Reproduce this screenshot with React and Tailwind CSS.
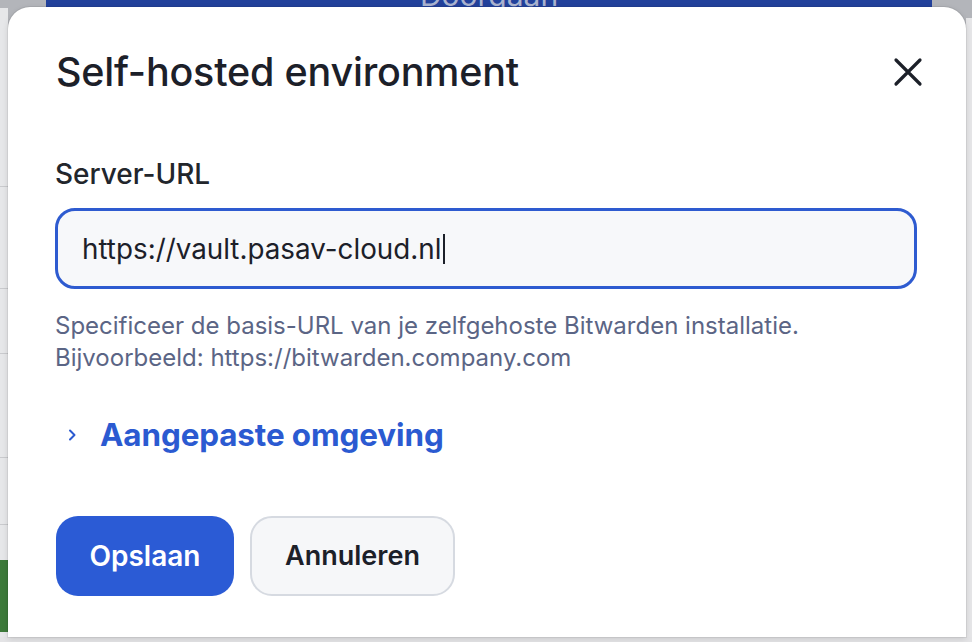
import React from 'react'

const font = { fontFamily: 'Inter, "Noto Sans", sans-serif' }

const SelfHostedDialog = () => {
    return (
        <div className="absolute left-[8px] top-[7px] w-[958px] h-[630px] bg-white rounded-t-[22px] shadow-[0_0_0_1px_rgba(0,0,0,0.06),0_2px_6px_rgba(0,0,0,0.12)] flex flex-col px-[47px]">
            <div className="flex flex-row items-center justify-between pt-[41px]">
                <h1 className="ml-[1px] text-[39.5px] leading-[48px] font-medium text-[#1c2029] tracking-[-0.2px]">Self-hosted environment</h1>
                <button className="mr-[-4px] text-[#1c2029]">
                    <svg width="30" height="30" viewBox="0 0 30 30" fill="none" stroke="currentColor" strokeWidth="3.2" strokeLinecap="round">
                        <path d="M3 3 L27 27 M27 3 L3 27" />
                    </svg>
                </button>
            </div>

            <label className="mt-[62px] text-[28px] leading-[32px] font-medium text-[#22262c]">Server-URL</label>

            <div className="mt-[18px] h-[81px] w-[862px] rounded-[20px] border-[3px] border-[#2e5bd0] bg-[#f7f8fa] flex flex-row items-center pl-[24px]">
                <span className="text-[27.8px] leading-[32px] text-[#1c2029]">https://vault.pasav-cloud.nl</span>
                <span className="ml-[2px] w-[2px] h-[30px] bg-[#1c2029]" />
            </div>

            <div className="mt-[21px] text-[24px] leading-[32px] text-[#5b6585]">
                <p>Specificeer de basis-URL van je zelfgehoste Bitwarden installatie.</p>
                <p>Bijvoorbeeld: https://bitwarden.company.com</p>
            </div>

            <button className="mt-[41px] flex flex-row items-center h-[40px] text-[#2b5ad1]">
                <svg className="ml-[12px]" width="10" height="14" viewBox="0 0 10 14" fill="none" stroke="currentColor" strokeWidth="2" strokeLinecap="round" strokeLinejoin="round">
                    <path d="M3 2.5 L7.5 7 L3 11.5" />
                </svg>
                <span className="ml-[23px] text-[31.4px] leading-[40px] font-bold tracking-[-0.1px]">Aangepaste omgeving</span>
            </button>

            <div className="mt-[61px] flex flex-row gap-[16px] ml-[1px]">
                <button className="w-[178px] h-[80px] rounded-[22px] bg-[#2b5bd5] text-white text-[28px] font-semibold">Opslaan</button>
                <button className="w-[205px] h-[80px] rounded-[22px] bg-[#f6f7f9] border-2 border-[#d6dae1] text-[#1c2029] text-[27px] font-semibold">Annuleren</button>
            </div>
        </div>
    )
}

const App = () => {
    return (
        <div className="relative w-[972px] h-[642px] overflow-hidden bg-[#b3b5ba]" style={font}>
            {/* dimmed page behind the dialog */}
            <div className="absolute left-[46px] top-0 w-[886px] h-[8px] bg-[#22419b] overflow-hidden flex justify-center">
                <span className="text-[30px] leading-[30px] -mt-[20px] text-[#aab3cf]">Doorgaan</span>
            </div>
            <div className="absolute left-0 top-[8px] w-[8px] h-[634px] bg-[#e6e7e9] flex flex-col">
                <div className="h-[58px]" />
                <div className="h-[1px] bg-[#c9cacd] mt-[120px]" />
                <div className="h-[1px] bg-[#c9cacd] mt-[101px]" />
                <div className="h-[1px] bg-[#c9cacd] mt-[64px]" />
                <div className="h-[1px] bg-[#c9cacd] mt-[103px]" />
                <div className="h-[1px] bg-[#c9cacd] mt-[66px]" />
                <div className="h-[72px] bg-[#3d7a3a] mt-[35px]" />
            </div>
            <div className="absolute right-0 top-[18px] w-[6px] h-[624px] bg-[#e6e6e8]" />
            <div className="absolute left-0 bottom-0 w-[972px] h-[5px] bg-[#e4e4e6]" />
            <SelfHostedDialog />
        </div>
    )
}

export default App
